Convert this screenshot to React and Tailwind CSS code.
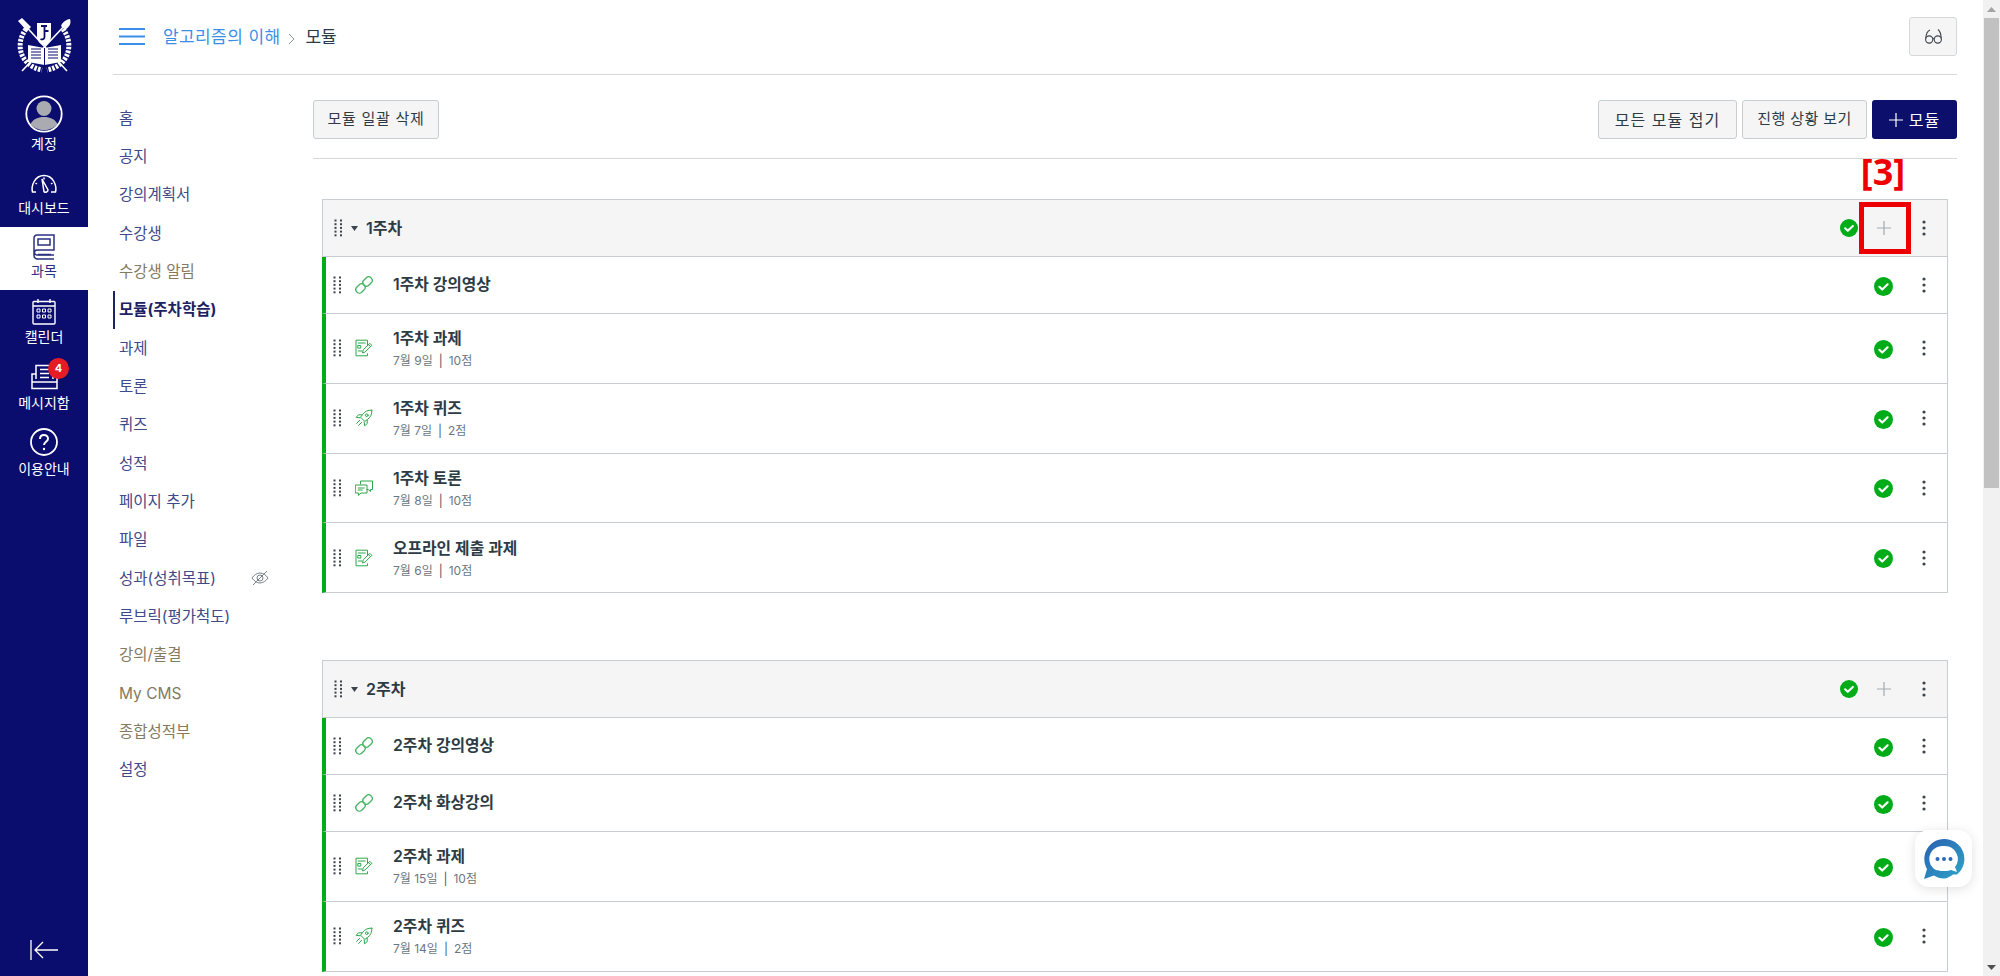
import React from "react";

const Grip = ({ className = "" }) => (
  <svg width="9" height="18" viewBox="0 0 9 18" className={className} fill="#3d454c">
    {[0.5, 4.2, 7.9, 11.6, 15.3].map((y) => (
      <g key={y}>
        <rect x="0.5" y={y} width="2" height="2" />
        <rect x="6" y={y} width="2" height="2" />
      </g>
    ))}
  </svg>
);

const Kebab = () => (
  <svg width="4" height="16" viewBox="0 0 4 16" fill="#3d454c">
    <circle cx="2" cy="2" r="1.6" />
    <circle cx="2" cy="8" r="1.6" />
    <circle cx="2" cy="14" r="1.6" />
  </svg>
);

const Check = ({ size = 19 }) => (
  <svg width={size} height={size} viewBox="0 0 19 19">
    <circle cx="9.5" cy="9.5" r="9.5" fill="#00ac18" />
    <path d="M5.4 9.8l2.8 2.7 5.4-5.2" fill="none" stroke="#fff" strokeWidth="2.2" strokeLinecap="round" strokeLinejoin="round" />
  </svg>
);

const Plus = ({ c = "#a3abb2" }) => (
  <svg width="14" height="14" viewBox="0 0 14 14" stroke={c} strokeWidth="1.2">
    <path d="M7 0v14M0 7h14" />
  </svg>
);

const ico = { fill: "none", stroke: "#2ea84a", strokeWidth: 1, strokeLinecap: "round", strokeLinejoin: "round" };

const LinkIcon = () => (
  <svg width="18" height="18" viewBox="0 0 18 18" fill="none" stroke="#45b565" strokeWidth="1.3">
    <g transform="rotate(-45 9 9)">
      <rect x="-1" y="5.5" width="10" height="7" rx="3.2" />
      <rect x="9" y="5.5" width="10" height="7" rx="3.2" />
    </g>
  </svg>
);

const AssignIcon = () => (
  <svg width="18" height="18" viewBox="0 0 18 18" {...ico}>
    <path d="M12.5 6.5V1.2H1v15.6h11.5v-2" />
    <path d="M3.2 4h7M3.2 6.5h2.6v2.6H3.2zM3.2 12h3.5" />
    <path d="M7.5 13.5l.7-2.6 6.6-6.6 2 2-6.6 6.6zM13.5 5.6l2 2" />
  </svg>
);

const QuizIcon = () => (
  <svg width="18" height="18" viewBox="0 0 18 18" {...ico}>
    <path d="M16.8 1.2c-4-.3-7 1.2-9.2 4.2L5.6 8.2l4.2 4.2 2.8-2c3-2.2 4.5-5.2 4.2-9.2z" />
    <circle cx="11.8" cy="6.2" r="1.3" />
    <path d="M7 5.8H3.4L1.2 8.4l4 .4M12.2 11v3.6l-2.6 2.2-.4-4M4.6 11.4l-3 3M6.6 13.4l-3 3" />
  </svg>
);

const ChatIcon = () => (
  <svg width="18" height="18" viewBox="0 0 18 18" {...ico}>
    <path d="M5.5 5V2h12v8.5h-2v2l-2.4-2H12" />
    <path d="M.7 6h11.3v8H6l-2.6 2.4V14H.7z" />
    <path d="M3.2 9h6M3.2 11h4" />
  </svg>
);

const icons = { link: LinkIcon, a: AssignIcon, q: QuizIcon, c: ChatIcon };

const modules = [
  {
    name: "1주차",
    items: [
      { i: "link", t: "1주차 강의영상" },
      { i: "a", t: "1주차 과제", m: "7월 9일", p: "10점" },
      { i: "q", t: "1주차 퀴즈", m: "7월 7일", p: "2점" },
      { i: "c", t: "1주차 토론", m: "7월 8일", p: "10점" },
      { i: "a", t: "오프라인 제출 과제", m: "7월 6일", p: "10점" },
    ],
  },
  {
    name: "2주차",
    items: [
      { i: "link", t: "2주차 강의영상" },
      { i: "link", t: "2주차 화상강의" },
      { i: "a", t: "2주차 과제", m: "7월 15일", p: "10점" },
      { i: "q", t: "2주차 퀴즈", m: "7월 14일", p: "2점" },
    ],
  },
];

const navItems = [
  ["홈", "text-[#3f4a8a]"],
  ["공지", "text-[#3f4a8a]"],
  ["강의계획서", "text-[#3f4a8a]"],
  ["수강생", "text-[#3f4a8a]"],
  ["수강생 알림", "text-[#857a60]"],
  ["모듈(주차학습)", "text-[#1d2263] font-bold", true],
  ["과제", "text-[#3f4a8a]"],
  ["토론", "text-[#3f4a8a]"],
  ["퀴즈", "text-[#3f4a8a]"],
  ["성적", "text-[#3f4a8a]"],
  ["페이지 추가", "text-[#3f4a8a]"],
  ["파일", "text-[#3f4a8a]"],
  ["성과(성취목표)", "text-[#3f4a8a]", false, true],
  ["루브릭(평가척도)", "text-[#3f4a8a]"],
  ["강의/출결", "text-[#857a60]"],
  ["My CMS", "text-[#857a60]"],
  ["종합성적부", "text-[#857a60]"],
  ["설정", "text-[#3f4a8a]"],
];

const Logo = () => (
  <svg width="55" height="56" viewBox="0 0 55 56" fill="none" stroke="#fff">
    <path d="M4 4l46 50" strokeWidth="1.6" />
    <path d="M50 6L5 54" strokeWidth="1.6" />
    <path d="M1 4l4-3 9 9-4 4z" fill="#fff" stroke="none" />
    <path d="M53 2c1.500 4-.5 8-5 11l-4-4c1.500-4 5-6.500 9-7z" fill="#fff" stroke="none" />
    <path d="M9 12C-3 28 4 49 25 53M46 12c12 16 5 37-16 41" strokeWidth="5" strokeDasharray="2.500 1.300" />
    <path d="M20 6h14v13c0 5-3 8-7 10-4-2-7-5-7-10z" fill="#fff" stroke="none" />
    <path d="M24 9h6M27.500 9v11c0 2-2 3-4 2M27.500 14h4" stroke="#0a0c6e" strokeWidth="1.800" />
    <path d="M11 28l16.500 3L44 28v17l-16.500 3L11 45z" fill="#fff" stroke="none" />
    <path d="M27.500 31v17M14 32h10M14 35h10M14 38h10M14 41h10M31 32h10M31 35h10M31 38h10M31 41h10" stroke="#0a0c6e" strokeWidth="1" />
  </svg>
);

const SideItem = ({ icon, label, active, className = "" }) => (
  <div className={`flex flex-col items-center justify-start ${active ? "bg-white text-[#2b3080]" : "text-white"} ${className}`}>
    {icon}
    <span className="text-[14px] leading-[17px]">{label}</span>
  </div>
);

const Btn = ({ children, className = "" }) => (
  <button className={`h-[39px] rounded-[3px] border border-[#c7cdd1] bg-[#f5f5f5] text-[#2d3b45] flex items-center justify-center ${className}`}>
    {children}
  </button>
);

export default function App() {
  return (
    <div className="relative flex h-[976px] w-[2000px] overflow-hidden bg-white font-['Inter','Noto_Sans_CJK_KR',sans-serif]">
      {/* Global navigation */}
      <aside className="w-[88px] shrink-0 bg-[#0a0c6e] flex flex-col items-stretch">
        <div className="h-[95px] flex items-start justify-center pt-[17px]">
          <Logo />
        </div>
        <SideItem
          className="h-[74px]"
          label="계정"
          icon={
            <svg width="38" height="38" viewBox="0 0 38 38" className="mb-[2px]">
              <circle cx="19" cy="13.5" r="7.500" fill="#a9abb0" />
              <path d="M5.500 29c3-5 7-7 13.500-7s10.500 2 13.500 7c-6.500 8-20.500 8-27 0z" fill="#a9abb0" />
              <circle cx="19" cy="19" r="17.700" fill="none" stroke="#fff" strokeWidth="1.800" />
            </svg>
          }
        />
        <SideItem
          className="h-[58px] pt-[5px]"
          label="대시보드"
          icon={
            <svg width="28" height="20" viewBox="0 0 28 20" fill="none" stroke="#fff" strokeWidth="1.5" className="mb-[5px]">
              <path d="M6 18H2.5C1 12 4.5 1.5 14 1.5S27 12 25.5 18H21" />
              <path d="M12 5l6 11a2.4 2.4 0 0 1-4 1.6z" />
              <path d="M5.5 9l1.5 1M14 3.5v2M22.5 9L21 10" />
            </svg>
          }
        />
        <SideItem
          active
          className="h-[63px] pt-[7px]"
          label="과목"
          icon={
            <svg width="22" height="26" viewBox="0 0 22 26" fill="none" stroke="#2b3080" strokeWidth="1.5" className="mb-[2px]">
              <path d="M21 21H4a2.5 2.5 0 0 1 0-5h17V1H4a3 3 0 0 0-3 3v17.500a3.500 3.500 0 0 0 3.500 3.500H21" />
              <path d="M5 5h12v6H5z" />
              <path d="M5 20.500h13" />
            </svg>
          }
        />
        <SideItem
          className="h-[67px] pt-[8px]"
          label="캘린더"
          icon={
            <svg width="24" height="27" viewBox="0 0 24 27" fill="none" stroke="#fff" strokeWidth="1.4" className="mb-[3px]">
              <rect x="1" y="3.500" width="22" height="22.500" rx="1" />
              <path d="M1 8h22M6 1v4M18 1v4" />
              <path d="M5 11h3v3H5zM10.500 11h3v3h-3zM16 11h3v3h-3zM5 17h3v3H5zM10.500 17h3v3h-3zM16 17h3v3h-3z" strokeWidth="1" />
            </svg>
          }
        />
        <div className="relative h-[65px] pt-[7px] flex flex-col items-center text-white">
          <svg width="27" height="26" viewBox="0 0 27 26" fill="none" stroke="#fff" strokeWidth="1.5" className="mb-[4px]">
            <path d="M5 15V1.500h17V15" />
            <path d="M9 5.500h9M9 9.500h9M9 13.500h9" />
            <path d="M5 10H1v14.500h25V10h-4" />
            <path d="M1 18h25" />
          </svg>
          <span className="text-[14px] leading-[17px]">메시지함</span>
          <span className="absolute top-[1px] left-[48px] h-[21px] w-[21px] rounded-full bg-[#e51c23] text-[11px] font-bold flex items-center justify-center">4</span>
        </div>
        <SideItem
          className="pt-[6px]"
          label="이용안내"
          icon={
            <svg width="28" height="28" viewBox="0 0 28 28" fill="none" stroke="#fff" strokeWidth="1.8" className="mb-[4px]">
              <circle cx="14" cy="14" r="13" />
              <path d="M10 11c0-2.500 1.800-4 4-4s4 1.500 4 3.800c0 3-4 3-4 6.200" strokeWidth="2" />
              <circle cx="14" cy="21" r="1.200" fill="#fff" stroke="none" />
            </svg>
          }
        />
        <div className="mt-auto h-[36px] flex justify-center">
          <svg width="28" height="20" viewBox="0 0 28 20" fill="none" stroke="#fff" strokeWidth="1.3">
            <path d="M1 0v20M28 10H5M13 2l-8 8 8 8" />
          </svg>
        </div>
      </aside>

      {/* Main column */}
      <main className="flex-1 min-w-0 pl-[25px] pr-[26px] flex flex-col">
        <header className="h-[75px] shrink-0 border-b border-[#d4d8db] flex items-center pb-[1px]">
          <svg width="26" height="17" viewBox="0 0 26 17" stroke="#3b8fe8" strokeWidth="2" className="ml-[6px] mr-[18px]">
            <path d="M0 1h26M0 8.500h26M0 16h26" />
          </svg>
          <span className="text-[#3b8fe8] text-[17px] tracking-[0.4px] mt-[2px]">알고리즘의 이해</span>
          <svg width="8" height="12" viewBox="0 0 8 12" fill="none" stroke="#8b969e" strokeWidth="1" className="ml-[8px] mr-[9px] mt-[5px]">
            <path d="M1 1l5 5-5 5" />
          </svg>
          <span className="text-[#2d3b45] text-[17px] mt-[2px]">모듈</span>
          <button className="ml-auto h-[39px] w-[48px] rounded-[3px] border border-[#d4d8db] bg-[#f5f5f5] flex items-center justify-center">
            <svg width="17" height="17" viewBox="0 0 17 17" fill="none" stroke="#3d454c" strokeWidth="1.1">
              <circle cx="4.200" cy="11.500" r="3.600" />
              <circle cx="12.800" cy="11.500" r="3.600" />
              <path d="M7.800 11c.5-.6.9-.6 1.400 0M.8 10.500C1 6 2.500 3 5 2M16.200 10.500C16 6 15 3 13 1.500" />
            </svg>
          </button>
        </header>

        <div className="flex flex-1 min-h-0">
          {/* Course navigation */}
          <nav className="w-[200px] shrink-0 pt-[24px]">
            {navItems.map(([label, cls, active, hidden]) => (
              <div key={label} className={`h-[38.350px] flex items-center text-[15.500px] ${active ? "border-l-2 border-[#1d2263] pl-[4px]" : "pl-[6px]"} ${cls}`}>
                <span>{label}</span>
                {hidden && (
                  <svg width="18" height="16" viewBox="0 0 18 16" fill="none" stroke="#7a828a" strokeWidth="1" className="ml-[35px]">
                    <path d="M1 8c2-3 5-5 8-5s6 2 8 5c-2 3-5 5-8 5s-6-2-8-5z" />
                    <circle cx="9" cy="8" r="3" />
                    <path d="M2 15L16 1" />
                  </svg>
                )}
              </div>
            ))}
          </nav>

          {/* Content */}
          <section className="flex-1 min-w-0 pt-[25px]">
            <div className="flex items-center gap-[5px] pb-[19px] border-b border-[#d4d8db]">
              <Btn className="w-[126px] mr-auto text-[15px] tracking-[0.7px]">모듈 일괄 삭제</Btn>
              <Btn className="w-[139px] text-[16px] tracking-[1px]">모든 모듈 접기</Btn>
              <Btn className="w-[125px] text-[15px] tracking-[0.4px]">진행 상황 보기</Btn>
              <button className="h-[39px] w-[85px] rounded-[3px] bg-[#0c0f6b] text-white text-[16px] tracking-[1px] flex items-center justify-center gap-[6px]">
                <Plus c="#fff" />
                모듈
              </button>
            </div>

            <div className="mx-[9px]">
              {modules.map((m, idx) => (
                <div key={m.name} className={idx === 0 ? "mt-[40px]" : "mt-[67px]"}>
                  <div className="h-[58px] flex items-center border border-[#c7cdd1] bg-[#f5f5f5] pl-[11px]">
                    <Grip />
                    <svg width="7" height="5" viewBox="0 0 7 5" fill="#3d454c" className="ml-[8px] mr-[8px]">
                      <path d="M0 0h7L3.500 5z" />
                    </svg>
                    <span className="text-[16px] font-semibold text-[#2d3b45]">{m.name}</span>
                    <span className="ml-auto flex items-center">
                      <Check size={18} />
                    </span>
                    <span className="ml-[19px] flex items-center">
                      <Plus />
                    </span>
                    <span className="ml-[31px] mr-[21px] flex items-center">
                      <Kebab />
                    </span>
                  </div>
                  {m.items.map((it) => {
                    const I = icons[it.i];
                    return (
                      <div key={it.t} className={`${it.m ? "h-[69.750px]" : "h-[57px]"} flex items-center border-l-4 border-l-[#00ac18] border-r border-b border-r-[#c7cdd1] border-b-[#c7cdd1] bg-white pl-[7px]`}>
                        <Grip />
                        <span className="ml-[13px] mr-[20px] flex items-center">
                          <I />
                        </span>
                        <div className={`flex flex-col ${it.m ? "mt-[2px]" : ""}`}>
                          <span className="text-[15.800px] leading-[20px] font-semibold text-[#2d3b45]">{it.t}</span>
                          {it.m && (
                            <span className="text-[12px] leading-[16px] mt-[4px] text-[#6b7780]">
                              {it.m}
                              <span className="mx-[6px] text-[#4b5660]">|</span>
                              {it.p}
                            </span>
                          )}
                        </div>
                        <span className="ml-auto flex items-center mt-[2px]">
                          <Check />
                        </span>
                        <span className="ml-[29px] mr-[21px] flex items-center">
                          <Kebab />
                        </span>
                      </div>
                    );
                  })}
                </div>
              ))}
            </div>
          </section>
        </div>
      </main>

      {/* Browser scrollbar */}
      <div className="w-[17px] shrink-0 bg-[#f1f1f1] flex flex-col items-center">
        <div className="h-[18px] flex items-center justify-center">
          <svg width="9" height="5" viewBox="0 0 9 5" fill="#a3a3a3"><path d="M4.500 0L9 5H0z" /></svg>
        </div>
        <div className="w-[15px] h-[470px] bg-[#c1c1c1]" />
        <div className="mt-auto h-[18px] flex items-center justify-center">
          <svg width="9" height="5" viewBox="0 0 9 5" fill="#505050"><path d="M0 0h9L4.500 5z" /></svg>
        </div>
      </div>

      {/* Annotation overlay */}
      <span className="absolute left-[1853px] top-[147px] w-[60px] text-center text-[36px] leading-[50px] font-bold text-[#ee0000] font-['Noto_Sans','Noto_Sans_CJK_KR',sans-serif]">[3]</span>
      <div className="absolute left-[1859px] top-[202px] w-[52px] h-[52px] border-[5px] border-[#ee0000]" />

      {/* Chat widget */}
      <div className="absolute left-[1915px] top-[830px] w-[57px] h-[57px] rounded-[14px] bg-white shadow-[0_2px_12px_rgba(0,0,0,0.12)] flex items-center justify-center">
        <svg width="42" height="42" viewBox="0 0 42 42">
          <defs>
            <linearGradient id="chatg" x1="0" y1="0" x2="1" y2="1">
              <stop offset="0" stopColor="#2a5fb0" />
              <stop offset="1" stopColor="#2ea6c8" />
            </linearGradient>
          </defs>
          <path d="M21 1a20 20 0 0 1 13 35.500L30 36.500c-3 2-6 4-9 4-4 0-7-1-10-3L1 41l3-10A20 20 0 0 1 21 1z" fill="url(#chatg)" />
          <path d="M21 8a13 13 0 0 1 11 21l2 5-6-2a13 13 0 0 1-7 1c-4 0-8 0-11-3A13 13 0 0 1 21 8z" fill="#fff" />
          <circle cx="14.500" cy="21" r="2" fill="#2a6bb5" />
          <circle cx="21" cy="21" r="2" fill="#2a6bb5" />
          <circle cx="27.500" cy="21" r="2" fill="#2a6bb5" />
        </svg>
      </div>
    </div>
  );
}
